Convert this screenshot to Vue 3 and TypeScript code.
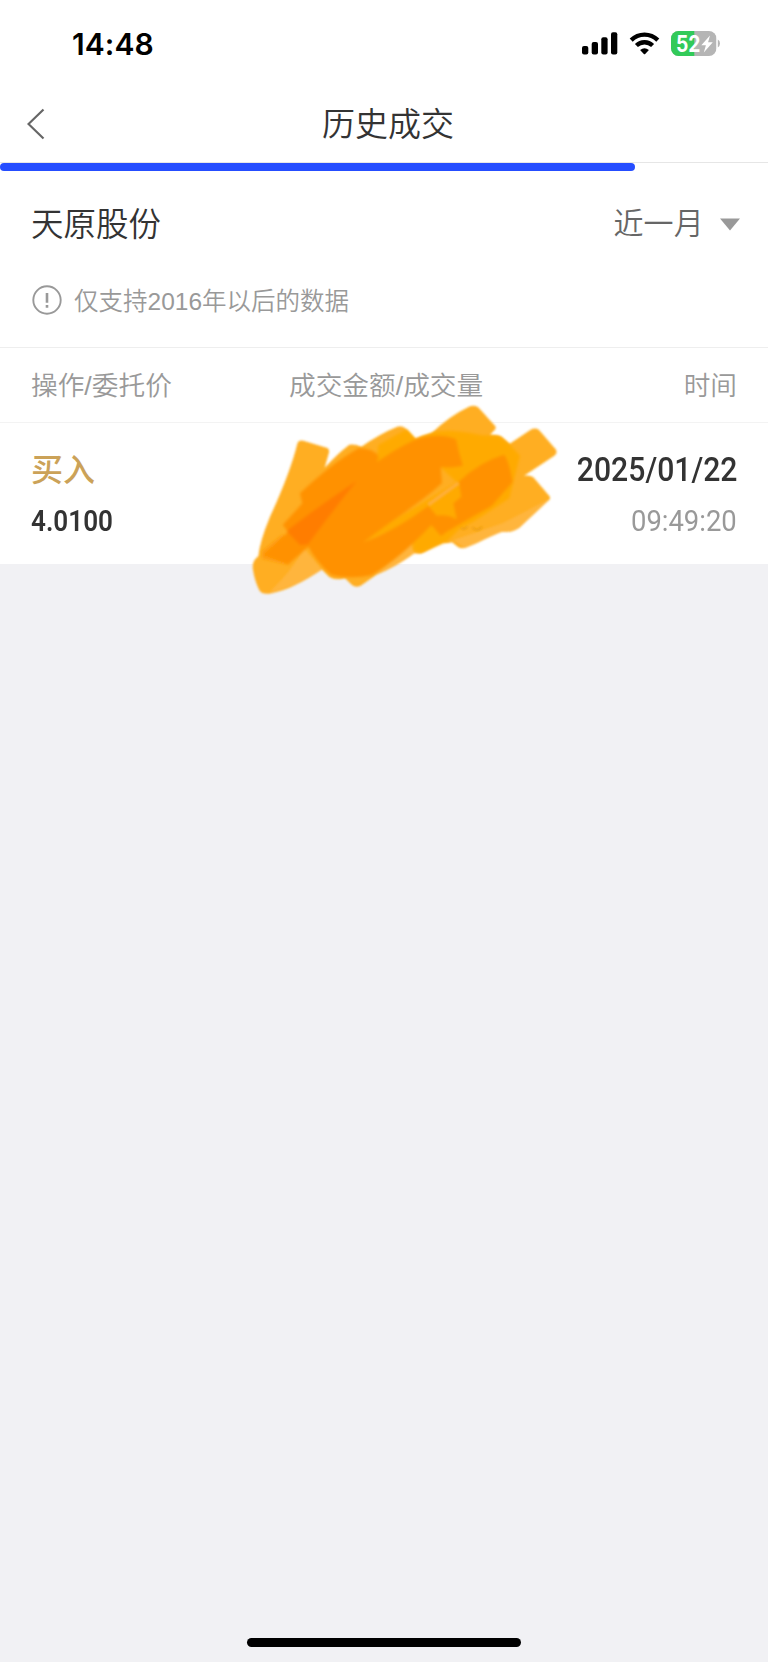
<script setup lang="ts">
interface Trade {
  side: string
  price: string
  date: string
  time: string
}

const columns: string[] = ['操作/委托价', '成交金额/成交量', '时间']
const trades: Trade[] = [
  { side: '买入', price: '4.0100', date: '2025/01/22', time: '09:49:20' },
]
</script>

<template>
  <div class="screen">
    <header class="status">
      <span class="clock">14:48</span>
      <div class="indicators">
        <svg class="signal" width="36" height="23" viewBox="0 0 36 23">
          <rect x="0" y="14" width="6.3" height="8.6" rx="2" />
          <rect x="9.7" y="10" width="6.3" height="12.6" rx="2" />
          <rect x="19.3" y="5.2" width="6.3" height="17.4" rx="2" />
          <rect x="29" y="0.3" width="6.3" height="22.3" rx="2" />
        </svg>
        <svg class="wifi" width="31" height="23" viewBox="0 0 31 23">
          <path d="M2.2 8.1a19 19 0 0 1 26.600 0M7.400 13.500a11.700 11.700 0 0 1 16.200 0" fill="none" stroke="#000" stroke-width="4.300" />
          <path d="M11.100 18q4.400-3.500 8.800 0l-3.700 3.900q-.7.6-1.400 0z" />
        </svg>
        <svg class="battery" width="49" height="25" viewBox="0 0 49 25">
          <defs><clipPath id="cell"><rect width="45.500" height="25" rx="7.500" /></clipPath></defs>
          <g clip-path="url(#cell)">
            <rect width="45.500" height="25" fill="#b5b5b5" />
            <rect width="23.300" height="25" fill="#32ca59" />
          </g>
          <path d="M46.800 8.600q2.200 1.200 2.200 3.900t-2.200 3.900z" fill="#b5b5b5" />
          <text x="5" y="20.500" textLength="24.500" lengthAdjust="spacingAndGlyphs" class="charge">52</text>
          <path d="M39 4.500 30.300 14.200h4.600L32.800 21.500l9-10.300h-4.700z" fill="#fff" />
        </svg>
      </div>
    </header>

    <nav class="nav">
      <svg class="back" width="18" height="32" viewBox="0 0 18 32">
        <path d="M16.500 1.500 1.500 16l15 14.500" fill="none" stroke="#666" stroke-width="2.200" />
      </svg>
      <h1>历史成交</h1>
    </nav>
    <div class="progress"><div class="progress-fill"></div></div>

    <section class="filter">
      <div class="filter-row">
        <span class="stock">天原股份</span>
        <span class="range"><span>近一月</span>
          <svg width="20" height="13" viewBox="0 0 20 13"><path d="M0 .5h20L10 12.500z" fill="#999" /></svg>
        </span>
      </div>
      <div class="notice">
        <svg width="30" height="30" viewBox="0 0 30 30">
          <circle cx="15" cy="15" r="13.700" fill="none" stroke="#999" stroke-width="1.900" />
          <path d="M15 8v9.700M15 20v2.700" stroke="#999" stroke-width="2.600" />
        </svg>
        <span>仅支持2016年以后的数据</span>
      </div>
    </section>

    <div class="head">
      <span v-for="c in columns" :key="c">{{ c }}</span>
    </div>

    <section v-for="t in trades" :key="t.time" class="trade">
      <div class="left">
        <span class="side">{{ t.side }}</span>
        <span class="price">{{ t.price }}</span>
      </div>
      <div class="right">
        <span class="date">{{ t.date }}</span>
        <span class="time">{{ t.time }}</span>
      </div>
      <svg class="marker" width="330" height="205" viewBox="0 0 990 615">
        <defs>
          <filter id="soft" x="-5%" y="-5%" width="110%" height="110%"><feGaussianBlur stdDeviation="2.500" /></filter>
          <filter id="smooth" x="-10%" y="-10%" width="120%" height="120%"><feGaussianBlur stdDeviation="4" /></filter>
        </defs>
        <g filter="url(#soft)">
          <path fill="#ffae20" d="M172 146Q176 134 190 137L262 159Q270 164 266 176L254 218Q290 178 328 149Q344 146 364 155Q420 116 472 95Q485 91 495 99L525 132Q552 120 575 115Q625 65 690 34Q706 29 716 38L766 94Q770 102 760 109L750 121Q774 119 785 125L808 147L872 104Q886 97 897 105L947 163Q954 173 943 182L823 262L848 243Q868 238 880 247L928 303Q934 311 924 318L838 398Q815 414 786 410C760 417 728 438 680 457Q665 463 654 456L636 442Q622 447 608 441Q580 455 554 470Q538 478 522 475C485 503 450 523 408 540L362 572Q347 579 336 570L315 550Q286 557 268 546L245 523C190 562 138 588 88 596Q66 599 58 586Q42 554 38 517Q38 495 55 484Q59 440 90 365Q150 235 172 146Z" />
          <path fill="#ffb53c" d="M190 458C175 500 130 550 90 590C130 586 190 560 246 524L220 493Z" />
          <path fill="#ffb53c" d="M400 541L510 440L523 475Q465 518 400 541ZM790 384L928 312L838 398Q815 414 786 410Q738 430 675 459L640 436Z" />
        </g>
        <g filter="url(#smooth)">
          <path fill="#ffaa00" d="M415 150L500 103L527 132L570 116Q600 105 640 108Q690 112 725 121L775 122L808 147L840 182L820 262L808 310L700 380L660 400L620 440L540 475L520 465V440L580 350L370 442L420 400L650 262L600 215L410 202Z" />
          <path fill="#ff9d10" d="M66 468L126 420L200 440L145 510L66 491Z" />
          <path fill="#ff9100" d="M180 295Q275 205 356 160Q400 160 416 184L410 202Q460 165 525 134Q595 111 648 132Q655 170 669 212Q635 220 602 216L606 264C540 325 450 380 370 442C450 412 515 370 565 332L590 362Q620 356 650 373L640 325L664 305L656 260Q720 200 792 179Q806 194 818 261L755 333L690 370L620 410L603 423L574 390Q480 490 394 541Q335 553 275 540Q232 505 205 455L145 508L70 480L145 410L128 390L187 325Z" />
          <path fill="#ff7d00" d="M140 408Q220 345 350 258Q295 325 204 448L180 450Z" />
        </g>
        <g filter="url(#soft)" fill="none">
          <path d="M565 329 655 264" stroke="#ffaf39" stroke-width="11" />
          <path d="M663 397q10 12 19-3M697 397q15 17 29-2" stroke="#ee9f10" stroke-width="6" />
        </g>
      </svg>
    </section>

    <footer class="bottom"><div class="home"></div></footer>
  </div>
</template>

<style>
html, body { margin: 0; background: #f1f1f4; }
</style>

<style scoped>
.screen {
  width: 768px;
  height: 1662px;
  display: flex;
  flex-direction: column;
  overflow: hidden;
  background: #f1f1f4;
  font-family: "Liberation Sans", "Noto Sans CJK SC", sans-serif;
  font-weight: 350;
  color: #333;
}
svg { display: block; flex: none; }
.status {
  height: 87px;
  box-sizing: border-box;
  padding: 0 48px 0 72px;
  background: #fff;
  display: flex;
  justify-content: space-between;
  align-items: center;
}
.clock { font: 600 30px/36px Inter, sans-serif; color: #000; letter-spacing: 0.1px; }
.indicators { display: flex; align-items: center; gap: 11px; }
.battery { margin-left: 0; }
.charge { font: 700 23px Inter, sans-serif; fill: #fff; }
.nav {
  height: 75px;
  background: #fff;
  display: flex;
  align-items: center;
  padding-left: 27px;
}
.back { margin-bottom: 2px; }
h1 { margin: 1px 0 0 277px; font-size: 33px; line-height: 48px; font-weight: 350; }
.progress { height: 10px; background: #fff; border-top: 1px solid #e6e6e6; }
.progress-fill { width: 635px; height: 8px; border-radius: 4px; background: #254dff; }
.filter { height: 174px; background: #fff; }
.filter-row {
  height: 103px;
  padding: 0 28px 0 31px;
  display: flex;
  justify-content: space-between;
  align-items: center;
}
.stock { font-size: 32.500px; line-height: 48px; }
.range {
  display: flex;
  align-items: center;
  gap: 16px;
  font-size: 30px;
  line-height: 44px;
  letter-spacing: 0.2px;
  color: #666;
}
.range span { margin-bottom: 2px; }
.notice {
  display: flex;
  align-items: center;
  gap: 12px;
  height: 48px;
  padding: 0 32px;
  font-size: 24.500px;
  color: #999;
}
.notice span { margin-bottom: 2px; }
.head {
  height: 74px;
  border-top: 1px solid #eee;
  border-bottom: 1px solid #f3f3f3;
  background: #fff;
  padding: 0 31px;
  display: grid;
  grid-template-columns: 258px 1fr auto;
  align-items: center;
  font-size: 26.700px;
  color: #999;
}
.head span { margin-bottom: 3px; }
.trade {
  position: relative;
  height: 141px;
  box-sizing: border-box;
  padding: 22px 31px 0;
  background: #fff;
  display: flex;
  justify-content: space-between;
}
.left, .right { display: flex; flex-direction: column; }
.right { align-items: flex-end; font-family: Roboto, sans-serif; }
.side { font-size: 32px; line-height: 50px; font-weight: 500; color: #cba258; }
.price {
  font: 600 29.500px/52px Roboto, sans-serif;
  transform: scaleX(0.885);
  transform-origin: left;
}
.date { font-size: 33.500px; line-height: 50px; font-weight: 500; transform: scaleX(0.9); transform-origin: right; }
.time { font-size: 29.500px; line-height: 52px; font-weight: 400; color: #999; transform: scaleX(0.93); transform-origin: right; }
.marker { position: absolute; left: 240px; top: -28px; z-index: 1; }
.bottom { flex: 1; display: flex; align-items: flex-end; justify-content: center; padding-bottom: 15px; }
.home { width: 274px; height: 9px; border-radius: 5px; background: #000; }
</style>
